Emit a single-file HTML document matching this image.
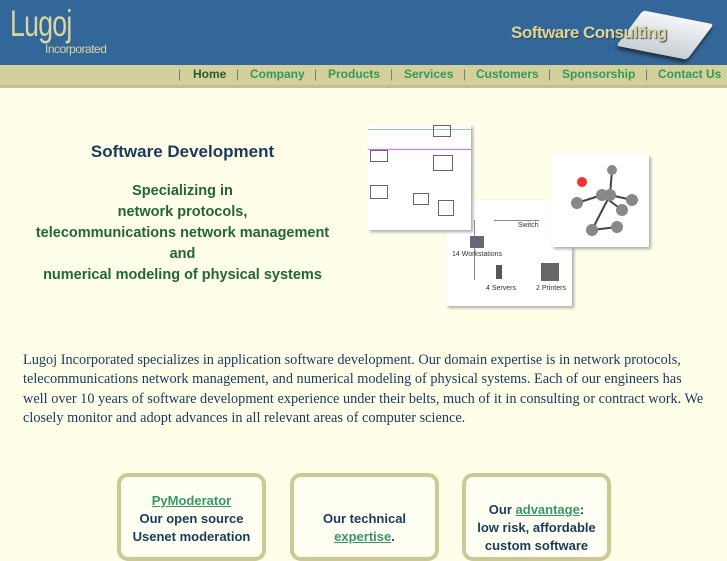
<!DOCTYPE html>
<html><head><style>
body{margin:0;width:727px;height:545px;overflow:hidden;background:#fefee9;font-family:"Liberation Sans",sans-serif;position:relative}
.hdr{position:absolute;left:0;top:0;width:727px;height:65px;background:#336699}
.nav{position:absolute;left:0;top:65px;width:727px;height:20px;background:#d3d09c;border-bottom:3px solid #c2bf8a;font-size:12px;font-weight:bold;color:#339955;line-height:19px}
.nav span{position:absolute;top:0}
.sep{color:#777;font-weight:normal}
a{color:#339966}
.t{position:absolute;text-align:center;font-weight:bold}
.box{position:absolute;top:473px;width:141px;height:80px;border:4px solid #cdc995;border-radius:11px;background:#fffff4;text-align:center;font-weight:bold;font-size:13px;color:#1a3a5c;line-height:18px}
</style></head><body>
<div class="hdr">
<div style="position:absolute;left:10px;top:3px;font-size:37px;color:#d6d7a0;letter-spacing:-1px;transform:scaleX(0.72);transform-origin:0 0">Lugoj</div>
<div style="position:absolute;left:45px;top:42px;font-size:12px;color:#d6d7a0;letter-spacing:-0.5px">Incorporated</div>
<div style="position:absolute;left:625px;top:17px;width:80px;height:36px;background:linear-gradient(#f4f6f8,#c9ced4);transform:skewX(-30deg) rotate(10deg);border-radius:3px;box-shadow:2px 3px 3px #234"></div>
<div style="position:absolute;left:511px;top:23px;font-size:17px;color:#d6d7a0;font-weight:bold;letter-spacing:-0.5px;text-shadow:1px 1px 1px #444">Software Consulting</div>
</div>
<div class="nav">
<span class="sep" style="left:178px">|</span><span style="left:193px;color:#2b5a2b">Home</span>
<span class="sep" style="left:236px">|</span><span style="left:250px">Company</span>
<span class="sep" style="left:314px">|</span><span style="left:328px">Products</span>
<span class="sep" style="left:390px">|</span><span style="left:404px">Services</span>
<span class="sep" style="left:463px">|</span><span style="left:476px">Customers</span>
<span class="sep" style="left:548px">|</span><span style="left:562px">Sponsorship</span>
<span class="sep" style="left:645px">|</span><span style="left:658px">Contact Us</span>
</div>
<div class="t" style="left:40px;width:285px;top:142px;font-size:17px;color:#1a3a5c">Software Development</div>
<div class="t" style="left:20px;width:325px;top:181px;font-size:14.5px;color:#226633;line-height:21px">Specializing in<br>network protocols,<br>telecommunications network management<br>and<br>numerical modeling of physical systems</div>
<div style="position:absolute;left:446px;top:200px;width:126px;height:106px;background:#fff;box-shadow:2px 2px 3px #aaa;font-size:7px;color:#333">
<div style="position:absolute;left:28px;top:20px;width:1px;height:60px;background:#888"></div>
<div style="position:absolute;left:48px;top:20px;width:45px;height:1px;background:#888"></div>
<div style="position:absolute;left:24px;top:36px;width:14px;height:12px;background:#667"></div>
<div style="position:absolute;left:6px;top:51px">14 Workstations</div>
<div style="position:absolute;left:72px;top:22px">Switch</div>
<div style="position:absolute;left:50px;top:65px;width:6px;height:14px;background:#555"></div>
<div style="position:absolute;left:40px;top:85px">4 Servers</div>
<div style="position:absolute;left:95px;top:63px;width:18px;height:18px;background:#666"></div>
<div style="position:absolute;left:90px;top:85px">2 Printers</div>
</div>
<div style="position:absolute;left:368px;top:125px;width:103px;height:105px;background:#fff;box-shadow:2px 2px 3px #aaa">
<div style="position:absolute;left:0;top:24px;width:103px;height:1px;background:#e6e"></div>
<div style="position:absolute;left:0;top:4px;width:103px;height:1px;background:#9c9"></div>
<div style="position:absolute;left:2px;top:25px;width:16px;height:10px;border:1px solid #666"></div>
<div style="position:absolute;left:2px;top:60px;width:16px;height:12px;border:1px solid #666"></div>
<div style="position:absolute;left:65px;top:0;width:16px;height:10px;border:1px solid #666"></div>
<div style="position:absolute;left:65px;top:30px;width:18px;height:14px;border:1px solid #666"></div>
<div style="position:absolute;left:45px;top:68px;width:14px;height:10px;border:1px solid #666"></div>
<div style="position:absolute;left:70px;top:75px;width:14px;height:14px;border:1px solid #666"></div>
</div>
<div style="position:absolute;left:552px;top:155px;width:97px;height:92px;background:#fff;box-shadow:2px 2px 3px #aaa">
<svg width="97" height="92"><g stroke="#444" stroke-width="2"><line x1="25" y1="48" x2="50" y2="40"/><line x1="50" y1="40" x2="70" y2="55"/><line x1="60" y1="15" x2="58" y2="40"/><line x1="58" y1="40" x2="80" y2="45"/><line x1="58" y1="40" x2="40" y2="75"/><line x1="40" y1="75" x2="65" y2="72"/></g><g fill="#888"><circle cx="25" cy="48" r="6"/><circle cx="50" cy="40" r="6"/><circle cx="58" cy="40" r="6"/><circle cx="70" cy="55" r="6"/><circle cx="80" cy="45" r="6"/><circle cx="60" cy="15" r="5"/><circle cx="40" cy="75" r="6"/><circle cx="65" cy="72" r="6"/></g><circle cx="30" cy="27" r="5" fill="#e33"/></svg>
</div>
<div style="position:absolute;left:23px;top:351px;white-space:nowrap;font-family:'Liberation Serif',serif;font-size:14.3px;line-height:19.3px;color:#1a3a5c">Lugoj Incorporated specializes in application software development. Our domain expertise is in network protocols,<br>telecommunications network management, and numerical modeling of physical systems. Each of our engineers has<br>well over 10 years of software development experience under their belts, much of it in consulting or contract work. We<br>closely monitor and adopt advances in all relevant areas of computer science.</div>
<div class="box" style="left:117px"><div style="margin-top:15px"><a href="#">PyModerator</a><br>Our open source<br>Usenet moderation</div></div>
<div class="box" style="left:290px"><div style="margin-top:33px">Our technical<br><a href="#">expertise</a>.</div></div>
<div class="box" style="left:462px"><div style="margin-top:24px">Our <a href="#">advantage</a>:<br>low risk, affordable<br>custom software</div></div>
</body></html>
